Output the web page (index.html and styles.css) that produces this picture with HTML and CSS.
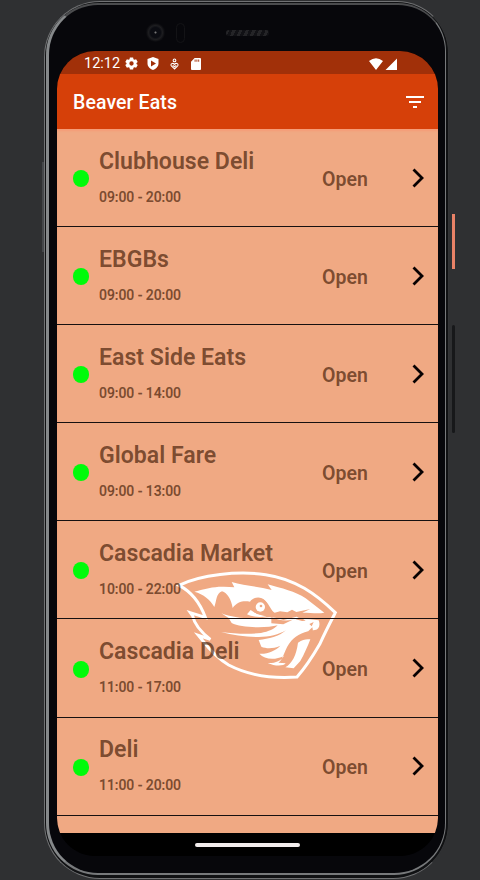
FILE: index.html
```html
<!DOCTYPE html>
<html lang="en">
<head>
<meta charset="utf-8">
<title>Beaver Eats</title>
<link rel="stylesheet" href="styles.css">
</head>
<body>
<div class="phone">
  <div class="bezel">
    <span class="camera"></span><span class="sensor"></span><span class="speaker"></span>
    <main class="screen">
      <header>
        <div class="status">
          <span class="clock">12:12</span>
          <svg class="gear" viewBox="0 0 24 24"><path fill="#fff" fill-rule="evenodd" d="M9 1h6l.6 3 2 1.1L20.500 4l3 5.200-2.300 2v1.600l2.300 2-3 5.200-2.900-1.100-2 1.100L15 23H9l-.6-3-2-1.100L3.500 20l-3-5.200 2.300-2v-1.600l-2.300-2L3.500 4l2.900 1.100 2-1.100zM12 8a4 4 0 1 0 0 8 4 4 0 0 0 0-8z"/></svg>
          <svg class="shield" viewBox="0 0 24 26"><path fill="#fff" fill-rule="evenodd" d="M12 0l11 4v9c0 6-5 11-11 13C6 24 1 19 1 13V4zM8 7v12l10-6z"/></svg>
          <svg class="heart" viewBox="0 0 20 26"><g fill="none" stroke="#fff" stroke-width="2.400"><circle cx="10" cy="5" r="3"/><path d="M10 24L3 17c-3-4 3-8 7-3 4-5 10-1 7 3zM6 16l4 3 4-3"/></g></svg>
          <svg class="sd" viewBox="0 0 22 26"><path fill="#fff" fill-rule="evenodd" d="M8 0h12q2 0 2 2v22q0 2-2 2H2q-2 0-2-2V8zM8 3v5h2V3zm4 0v5h2V3zm4 0v5h2V3z"/></svg>
          <svg class="signals" viewBox="0 0 28 12"><path fill="#fff" d="M0 3Q7-2.500 14 3L7 12zM28 .5V12H16.500z"/></svg>
        </div>
        <div class="appbar">
          <h1>Beaver Eats</h1>
          <svg class="filter" viewBox="0 0 18 12"><path fill="#fff" d="M0 0h18v2H0zM3 5h12v2H3zM7 10h4v2H7z"/></svg>
        </div>
      </header>
      <section class="list">
        <svg class="logo" viewBox="0 0 540 390">
          <path class="outline" d="M45 76C110 44 222 32 305 44C394 57 456 102 514 158C493 198 485 213 467 253C445 291 424 323 399 351C327 356 253 346 194 315C158 294 137 269 116 242L103 226L139 238C112 217 91 191 86 168L79 158L124 172C109 131 84 96 45 76Z"/>
          <g fill="#fff">
            <path d="M91 95C125 86 150 79 180 80L211 82L203 66C239 78 282 78 323 90L311 73C353 85 394 94 425 115L481 158C461 162 441 158 415 158L439 147L397 156L384 149L370 157L348 154L332 158C320 150 318 136 304 122C289 106 266 112 258 125C238 121 219 125 206 144C202 119 190 98 174 94C156 100 158 123 151 141C139 119 119 103 91 95Z"/>
            <path d="M172 160C205 173 250 178 295 174C319 169 340 173 358 180L398 170L410 177L438 178L464 181C470 196 464 208 453 210C425 212 397 226 382 242C362 264 359 298 343 308L365 310C359 319 332 319 311 309C334 310 351 302 360 287C332 302 302 298 286 281C310 283 335 272 349 257C326 267 307 266 292 260L284 240C314 237 346 229 366 211C343 224 313 232 278 231C243 230 204 226 171 216C214 222 258 223 291 219C314 215 331 207 341 196C307 205 231 204 203 189L194 174Z"/>
            <path d="M402 248C417 237 428 237 439 238C430 261 421 282 409 303L389 325L364 322C385 309 397 286 402 248Z"/>
            <path d="M249 163C260 170 286 173 308 169C290 166 269 158 260 150Z"/>
          </g>
          <circle class="eye" cx="288" cy="140" r="20"/>
          <circle cx="289" cy="141" r="14" fill="#fff"/><circle class="cut" cx="291" cy="138" r="4"/>
          <path class="cut" d="M395 178L414 183L425 182L413 174ZM431 215L445 202L447 212ZM436 192L449 186L443 199ZM322 171C340 180 365 184 386 179L358 193L322 190Z"/>
        </svg>
        <article><i></i><div class="info"><h2>Clubhouse Deli</h2><p>09:00 - 20:00</p></div><b>Open</b><svg viewBox="0 0 12 20"><path d="M1.500 1.500L10 10l-8.500 8.500"/></svg></article>
        <article><i></i><div class="info"><h2>EBGBs</h2><p>09:00 - 20:00</p></div><b>Open</b><svg viewBox="0 0 12 20"><path d="M1.500 1.500L10 10l-8.500 8.500"/></svg></article>
        <article><i></i><div class="info"><h2>East Side Eats</h2><p>09:00 - 14:00</p></div><b>Open</b><svg viewBox="0 0 12 20"><path d="M1.500 1.500L10 10l-8.500 8.500"/></svg></article>
        <article><i></i><div class="info"><h2>Global Fare</h2><p>09:00 - 13:00</p></div><b>Open</b><svg viewBox="0 0 12 20"><path d="M1.500 1.500L10 10l-8.500 8.500"/></svg></article>
        <article><i></i><div class="info"><h2>Cascadia Market</h2><p>10:00 - 22:00</p></div><b>Open</b><svg viewBox="0 0 12 20"><path d="M1.500 1.500L10 10l-8.500 8.500"/></svg></article>
        <article><i></i><div class="info"><h2>Cascadia Deli</h2><p>11:00 - 17:00</p></div><b>Open</b><svg viewBox="0 0 12 20"><path d="M1.500 1.500L10 10l-8.500 8.500"/></svg></article>
        <article><i></i><div class="info"><h2>Deli</h2><p>11:00 - 20:00</p></div><b>Open</b><svg viewBox="0 0 12 20"><path d="M1.500 1.500L10 10l-8.500 8.500"/></svg></article>
      </section>
      <footer><span></span></footer>
    </main>
  </div>
  <span class="rim"></span><span class="power"></span><span class="volume"></span>
</div>
</body>
</html>
```
FILE: styles.css
```css
* { box-sizing: border-box; }
body { margin: 0; height: 880px; overflow: hidden; background: #2f3032; font-family: Roboto, sans-serif; }
.phone { position: relative; width: 405px; height: 878px; margin: 1px 0 0 44px; padding: 1px 2px 2px 1px; border-radius: 56px 52px 56px 56px; background: #101113; border: 1px solid #717274; border-right-color: #333436; }
.bezel { position: relative; height: 872px; border: 2px solid #77797b; border-width: 2px 1px 2px 3px; border-color: #4b4c4e #77797b #77797b #85888a; border-radius: 52px 48px 52px 52px; background: #07070b; padding: 46px 8px 0 8px; }
.screen { display: flex; flex-direction: column; width: 381px; height: 805px; border-radius: 38px; overflow: hidden; background: #000; }
.status { display: flex; align-items: center; height: 23px; background: #a13009; padding: 2px 41px 0 27px; color: #fff; }
.clock { width: 41px; font-size: 14.500px; line-height: 22px; }
.gear { width: 13px; height: 13px; }
.shield { width: 12px; height: 13px; margin-left: 9px; }
.heart { width: 9px; height: 12px; margin-left: 11px; }
.sd { width: 10px; height: 12px; margin-left: 12px; }
.signals { width: 28px; height: 12px; margin-left: auto; }
.appbar { display: flex; align-items: center; justify-content: space-between; height: 55px; padding: 0 14px 0 16px; background: #d64009; }
h1 { margin: 2px 0 0; font-size: 19.500px; font-weight: 500; color: #fff; letter-spacing: .1px; }
.filter { width: 18px; height: 12px; margin-top: 1px; }
.list { position: relative; height: 704px; flex: none; overflow: hidden; background: #f0a983; box-shadow: inset 0 2px 2px #f69c78; border-radius: 0 0 3px 3px / 0 0 14px 14px; }
.logo { position: absolute; left: 107px; top: 431px; width: 180px; height: 130px; }
.outline { fill: none; stroke: #fff; stroke-width: 9; stroke-linejoin: miter; }
.eye { fill: none; stroke: #f0a983; stroke-width: 7; }
.cut { fill: #f0a983; }
article { position: relative; display: flex; align-items: center; height: 98.100px; padding: 0 14px 0 16px; border-bottom: 1.200px solid #171010; }
article i { width: 16px; height: 17px; border-radius: 8px; background: #00fb0a; margin-top: 2px; }
.info { width: 223px; margin: -3px 0 0 10px; color: rgba(58, 21, 0, .65); }
h2 { margin: 0; font-size: 23.100px; line-height: 30px; font-weight: 600; color: rgba(58, 21, 0, .65); white-space: nowrap; }
.info p { margin: 11px 0 0; font-size: 14px; line-height: 18px; font-weight: 500; letter-spacing: -.060px; -webkit-text-stroke: .2px rgba(58, 21, 0, .5); }
article b { font-size: 19.500px; font-weight: 600; color: rgba(58, 21, 0, .65); margin-top: 3px; }
article svg { width: 12px; height: 20px; margin-left: auto; }
article path { fill: none; stroke: #080101; stroke-width: 2.800; }
footer { height: 23px; flex: none; display: flex; align-items: center; justify-content: center; background: #000; }
footer span { width: 105px; height: 4px; border-radius: 2px; background: #f2eded; }
.camera { position: absolute; left: 97px; top: 18px; width: 19px; height: 19px; border-radius: 50%; background: radial-gradient(circle, #777 0 .5px, #0b0c12 1.500px 5px, #1d1d20 7px, #0c0c10 9px); }
.sensor { position: absolute; left: 127px; top: 18px; width: 9px; height: 20px; border: 1px solid #131316; border-radius: 5px; }
.speaker { position: absolute; left: 177px; top: 25px; width: 43px; height: 6px; border-radius: 3px; background: repeating-linear-gradient(115deg, #242427 0 3px, #111115 3px 6px); }
.rim { position: absolute; left: -3px; top: 160px; width: 2px; height: 90px; background: #45474a; }
.power { position: absolute; left: 407px; top: 212px; width: 3px; height: 55px; background: #e98267; }
.volume { position: absolute; left: 407px; top: 323px; width: 3px; height: 108px; background: #17181a; border-radius: 2px; }
```
